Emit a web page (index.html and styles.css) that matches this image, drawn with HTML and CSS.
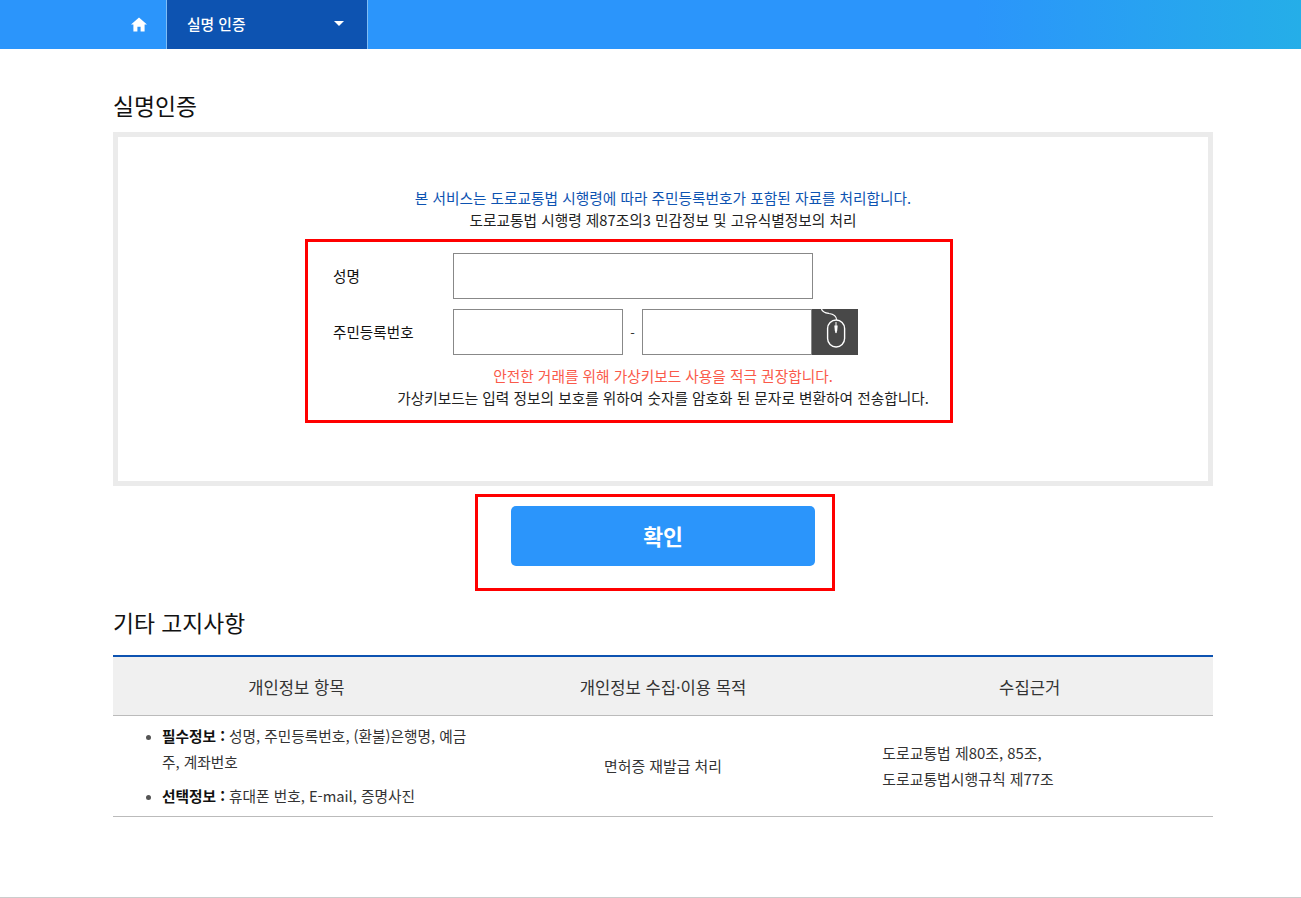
FILE: index.html
```html
<!DOCTYPE html>
<html lang="ko">
<head>
    <meta charset="UTF-8">
    <title>실명인증</title>
    <link rel="stylesheet" href="styles.css">
</head>
<body>

    <!-- Top Navigation -->
    <header class="topbar">
        <a class="home-link" href="#">
            <svg width="16" height="15" viewBox="0 0 16 15"><path d="M8 0.5 L16 7.5 L13.6 7.5 L13.6 14.5 L9.6 14.5 L9.6 9.8 L6.4 9.8 L6.4 14.5 L2.4 14.5 L2.4 7.5 L0 7.5 Z" fill="#ffffff"/></svg>
        </a>
        <div class="nav-select">
            <span>실명 인증</span>
            <i class="caret"></i>
        </div>
    </header>

    <div class="container">
        <h2 class="title">실명인증</h2>

        <div class="auth-box">
            <p class="notice-blue">본 서비스는 도로교통법 시행령에 따라 주민등록번호가 포함된 자료를 처리합니다.</p>
            <p class="notice-dark">도로교통법 시행령 제87조의3 민감정보 및 고유식별정보의 처리</p>

            <div class="red-box form-box">
                <div class="form-row">
                    <label class="form-label">성명</label>
                    <input class="input name-input" type="text">
                </div>
                <div class="form-row">
                    <label class="form-label">주민등록번호</label>
                    <input class="input id-input" type="text">
                    <span class="dash">-</span>
                    <input class="input id-input" type="text">
                    <button class="mouse-button" type="button">
                        <svg width="46" height="46" viewBox="0 0 46 46" fill="none" stroke="#ffffff">
                            <path d="M9.5 0 C10.5 3.5 14 4 17 4.5 C21 5 24.5 7 24.7 11" stroke-width="1.2"/>
                            <rect x="15.6" y="11" width="17" height="27" rx="8.5" stroke-width="1.4"/>
                            <path d="M24 13 L24 24" stroke-width="1"/>
                            <path d="M22.3 16.5 L25.7 16.5 L25.2 21.5 L24 24.5 L22.8 21.5 Z" fill="#ffffff" stroke="none"/>
                        </svg>
                    </button>
                </div>
                <p class="warn-text">안전한 거래를 위해 가상키보드 사용을 적극 권장합니다.</p>
                <p class="form-text">가상키보드는 입력 정보의 보호를 위하여 숫자를 암호화 된 문자로 변환하여 전송합니다.</p>
            </div>
        </div>

        <div class="red-box button-box">
            <button class="confirm-button" type="button">확인</button>
        </div>

        <h2 class="title title-notice">기타 고지사항</h2>

        <table class="notice-table">
            <thead>
                <tr>
                    <th>개인정보 항목</th>
                    <th>개인정보 수집·이용 목적</th>
                    <th>수집근거</th>
                </tr>
            </thead>
            <tbody>
                <tr>
                    <td class="col-items">
                        <ul>
                            <li><b>필수정보 :</b> 성명, 주민등록번호, (환불)은행명, 예금주, 계좌번호</li>
                            <li><b>선택정보 :</b> 휴대폰 번호, E-mail, 증명사진</li>
                        </ul>
                    </td>
                    <td class="col-purpose">면허증 재발급 처리</td>
                    <td class="col-basis">도로교통법 제80조, 85조,<br>도로교통법시행규칙 제77조</td>
                </tr>
            </tbody>
        </table>
    </div>

    <footer class="footer-line"></footer>

</body>
</html>
```

FILE: styles.css
```css
* {
    box-sizing: border-box;
}

html, body {
    height: 100%;
}

body {
    margin: 0;
    padding: 0;
    background-color: #ffffff;
    font-family: "Noto Sans CJK KR", "Noto Sans", sans-serif;
    font-size: 14.7px;
    color: #333333;
    display: flex;
    flex-direction: column;
}

p {
    margin: 0;
}

/* Top navigation */
.topbar {
    height: 49px;
    flex-shrink: 0;
    display: flex;
    padding-left: 113px;
    background: linear-gradient(90deg, #2b95fb 0%, #2b95fb 75%, #25aee8 100%);
}

.home-link {
    width: 54px;
    padding-right: 2px;
    display: flex;
    align-items: center;
    justify-content: center;
    border-right: 1px solid #7fbdf5;
}

.nav-select {
    width: 201px;
    padding: 0 23px 3px 20px;
    display: flex;
    align-items: center;
    justify-content: space-between;
    background-color: #0d53b1;
    border-right: 1px solid #7fbdf5;
    color: #ffffff;
    font-size: 14.8px;
    font-weight: 500;
}

.caret {
    width: 0;
    height: 0;
    border-left: 5px solid transparent;
    border-right: 5px solid transparent;
    border-top: 5px solid #ffffff;
}

/* Main area */
.container {
    width: 1100px;
    margin-left: 113px;
    flex: 1;
}

.title {
    margin: 42px 0 8px;
    height: 33px;
    line-height: 29px;
    font-size: 22.8px;
    font-weight: 400;
    color: #111111;
}

.title-notice {
    margin: 17px 0 14px;
}

.auth-box {
    height: 354px;
    border: 5px solid #ebebeb;
    padding-top: 50px;
    text-align: center;
}

.notice-blue {
    line-height: 22px;
    color: #0d53b1;
}

.notice-dark {
    line-height: 22px;
    color: #222222;
}

.red-box {
    border: 3px solid #ff0000;
}

.form-box {
    width: 648px;
    height: 184px;
    margin: 8px 0 0 187px;
    padding: 11px 0 0 25px;
}

.form-row {
    display: flex;
    align-items: center;
    height: 46px;
    margin-bottom: 10px;
}

.form-label {
    width: 120px;
    padding-bottom: 2px;
    text-align: left;
    font-size: 14.6px;
    color: #111111;
}

.input {
    height: 46px;
    border: 1px solid #888888;
    border-radius: 0;
    background-color: #ffffff;
}

.name-input {
    width: 360px;
}

.id-input {
    width: 170px;
}

.dash {
    width: 19px;
    text-align: center;
    font-size: 13px;
}

.mouse-button {
    width: 46px;
    height: 46px;
    padding: 0;
    border: none;
    background-color: #484848;
    display: block;
}

.warn-text {
    margin-left: 43px;
    line-height: 22px;
    color: #fa5a4a;
}

.form-text {
    margin-left: 43px;
    line-height: 22px;
    color: #222222;
}

.button-box {
    width: 360px;
    height: 97px;
    margin: 8px 0 0 362px;
    padding: 9px 33px 0;
}

.confirm-button {
    display: block;
    width: 304px;
    height: 60px;
    margin: 0 auto;
    padding-bottom: 2px;
    border: none;
    border-radius: 5px;
    background-color: #2b95fb;
    color: #ffffff;
    font-family: inherit;
    font-size: 21.6px;
    font-weight: 700;
}

/* Notice table */
.notice-table {
    width: 100%;
    table-layout: fixed;
    border-collapse: collapse;
    border-top: 2px solid #0d53b1;
    border-bottom: 1px solid #bbbbbb;
}

.notice-table th {
    height: 59px;
    padding: 2px 0 0;
    background-color: #f0f0f0;
    border-bottom: 1px solid #bbbbbb;
    font-size: 16.6px;
    font-weight: 400;
    color: #333333;
}

.notice-table td {
    padding: 0;
    text-align: center;
    vertical-align: middle;
}

.notice-table ul {
    margin: 0;
    padding: 7px 12px 7px 49px;
    text-align: left;
    line-height: 26px;
}

.notice-table li + li {
    margin-top: 8px;
}

.notice-table li::marker {
    font-size: 12px;
    color: #555555;
}

.notice-table li b {
    color: #111111;
}

.notice-table td.col-purpose {
    font-size: 14.9px;
}

.notice-table td.col-basis {
    padding-left: 36px;
    text-align: left;
    line-height: 26px;
    font-size: 14.9px;
}

/* Footer */
.footer-line {
    height: 1px;
    flex-shrink: 0;
    background-color: #cccccc;
}
```
